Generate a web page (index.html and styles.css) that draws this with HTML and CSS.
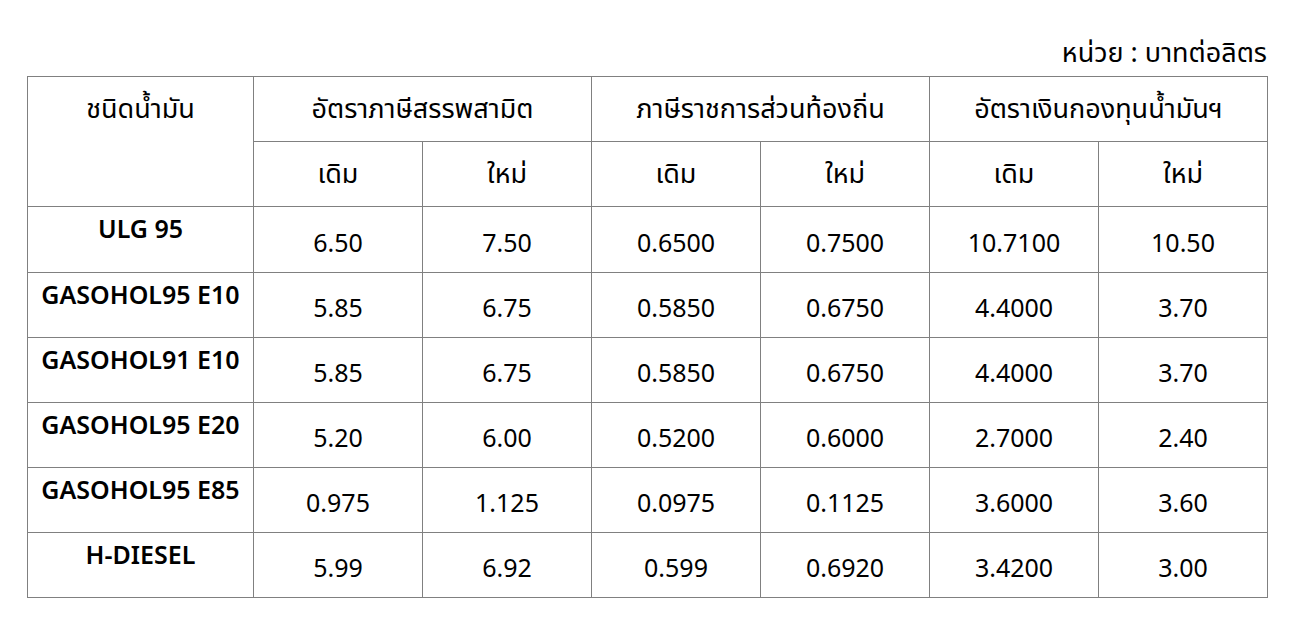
FILE: index.html
```html
<!DOCTYPE html>
<html lang="th">
<head>
<meta charset="utf-8">
<link rel="stylesheet" href="styles.css">
</head>
<body>
<div class="page">
  <div class="unit">หน่วย : บาทต่อลิตร</div>
  <table class="rates">
    <colgroup>
      <col class="c-name">
      <col class="c-val"><col class="c-val">
      <col class="c-val"><col class="c-val">
      <col class="c-val"><col class="c-val">
    </colgroup>
    <thead>
      <tr class="hrow">
        <th rowspan="2" class="name-h">ชนิดน้ำมัน</th>
        <th colspan="2">อัตราภาษีสรรพสามิต</th>
        <th colspan="2">ภาษีราชการส่วนท้องถิ่น</th>
        <th colspan="2">อัตราเงินกองทุนน้ำมันฯ</th>
      </tr>
      <tr class="hrow">
        <th>เดิม</th><th>ใหม่</th>
        <th>เดิม</th><th>ใหม่</th>
        <th>เดิม</th><th>ใหม่</th>
      </tr>
    </thead>
    <tbody>
      <tr class="first"><td class="fuel">ULG 95</td><td>6.50</td><td>7.50</td><td>0.6500</td><td>0.7500</td><td>10.7100</td><td>10.50</td></tr>
      <tr><td class="fuel">GASOHOL95 E10</td><td>5.85</td><td>6.75</td><td>0.5850</td><td>0.6750</td><td>4.4000</td><td>3.70</td></tr>
      <tr><td class="fuel">GASOHOL91 E10</td><td>5.85</td><td>6.75</td><td>0.5850</td><td>0.6750</td><td>4.4000</td><td>3.70</td></tr>
      <tr><td class="fuel">GASOHOL95 E20</td><td>5.20</td><td>6.00</td><td>0.5200</td><td>0.6000</td><td>2.7000</td><td>2.40</td></tr>
      <tr><td class="fuel">GASOHOL95 E85</td><td>0.975</td><td>1.125</td><td>0.0975</td><td>0.1125</td><td>3.6000</td><td>3.60</td></tr>
      <tr><td class="fuel">H-DIESEL</td><td>5.99</td><td>6.92</td><td>0.599</td><td>0.6920</td><td>3.4200</td><td>3.00</td></tr>
    </tbody>
  </table>
</div>
</body>
</html>
```
FILE: styles.css
```css
html, body {
  margin: 0;
  padding: 0;
  background: #ffffff;
}
body {
  font-family: "Noto Sans", "Noto Sans Thai", "Open Sans", sans-serif;
  color: #000000;
}
.page {
  padding: 36px 32px 0 27px;
  width: 1239px;
}
.unit {
  text-align: right;
  font-size: 27px;
  line-height: 32px;
  height: 40px;
  margin-right: -1px;
}
.rates {
  border-collapse: collapse;
  table-layout: fixed;
  width: 1240px;
  font-size: 25px;
}
.c-name { width: 226px; }
.c-val { width: 169px; }
.rates th, .rates td {
  border: 1px solid #808080;
  padding: 0;
  text-align: center;
}
.rates th {
  font-weight: normal;
  font-size: 27px;
  height: 64px;
  vertical-align: middle;
}
.rates th.name-h {
  vertical-align: top;
  padding-top: 12px;
}
.rates td {
  height: 60px;
  vertical-align: middle;
  padding-top: 4px;
}
.rates tr.first td {
  height: 61px;
}
.rates td.fuel {
  font-weight: 600;
  vertical-align: top;
  padding-top: 4px;
}
```
